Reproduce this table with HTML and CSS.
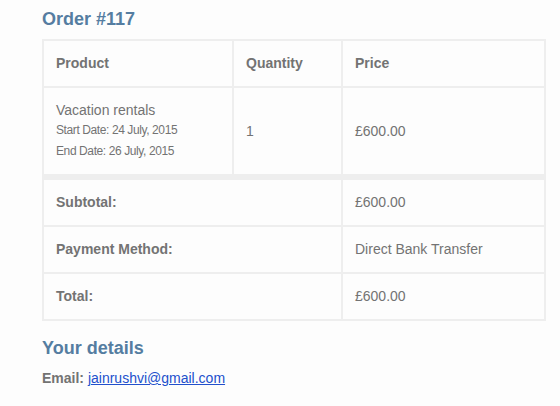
FILE: index.html
```html
<!DOCTYPE html>
<html>
<head>
<meta charset="utf-8">
<link rel="stylesheet" href="styles.css">
</head>
<body>
<div class="wrap">
  <h2 class="title">Order #117</h2>
  <table class="order">
    <colgroup>
      <col class="c1"><col class="c2"><col class="c3">
    </colgroup>
    <thead>
      <tr><th>Product</th><th>Quantity</th><th>Price</th></tr>
    </thead>
    <tbody>
      <tr>
        <td class="prod">
          <div class="pname">Vacation rentals</div>
          <div class="meta">Start Date: 24 July, 2015</div>
          <div class="meta">End Date: 26 July, 2015</div>
        </td>
        <td>1</td>
        <td>£600.00</td>
      </tr>
    </tbody>
    <tfoot>
      <tr class="first"><th colspan="2">Subtotal:</th><td>£600.00</td></tr>
      <tr><th colspan="2">Payment Method:</th><td>Direct Bank Transfer</td></tr>
      <tr><th colspan="2">Total:</th><td>£600.00</td></tr>
    </tfoot>
  </table>
  <h2 class="title details">Your details</h2>
  <p class="email"><strong>Email:</strong> <a href="#">jainrushvi@gmail.com</a></p>
</div>
</body>
</html>
```
FILE: styles.css
```css
html, body {
  margin: 0;
  padding: 0;
  background: #fdfdfd;
}
body {
  font-family: "Liberation Sans", Arial, sans-serif;
  color: #737373;
  font-size: 14px;
}
.wrap {
  padding: 8px 14px 0 42px;
}
.title {
  margin: 0 0 9px 0;
  font-size: 18px;
  line-height: 22px;
  font-weight: bold;
  color: #557da1;
}
.details {
  margin-top: 16px;
}
.order {
  width: 504px;
  border-collapse: collapse;
  border: 2px solid #eeeeee;
}
.c1 { width: 190px; }
.c2 { width: 109px; }
.order th, .order td {
  border: 2px solid #eeeeee;
  padding: 12px;
  text-align: left;
  vertical-align: middle;
  font-size: 14px;
  line-height: 21px;
  color: #737373;
}
.order th {
  font-weight: bold;
}
.order tfoot tr.first th, .order tfoot tr.first td {
  border-top: 6px solid #eeeeee;
}
.pname {
  line-height: 20px;
}
.meta {
  font-size: 12px;
  line-height: 21px;
  letter-spacing: -0.4px;
}
.email {
  margin: 9px 0 0 0;
  line-height: 21px;
}
.email strong {
  font-weight: bold;
}
.email a {
  color: #2250cc;
}
```
